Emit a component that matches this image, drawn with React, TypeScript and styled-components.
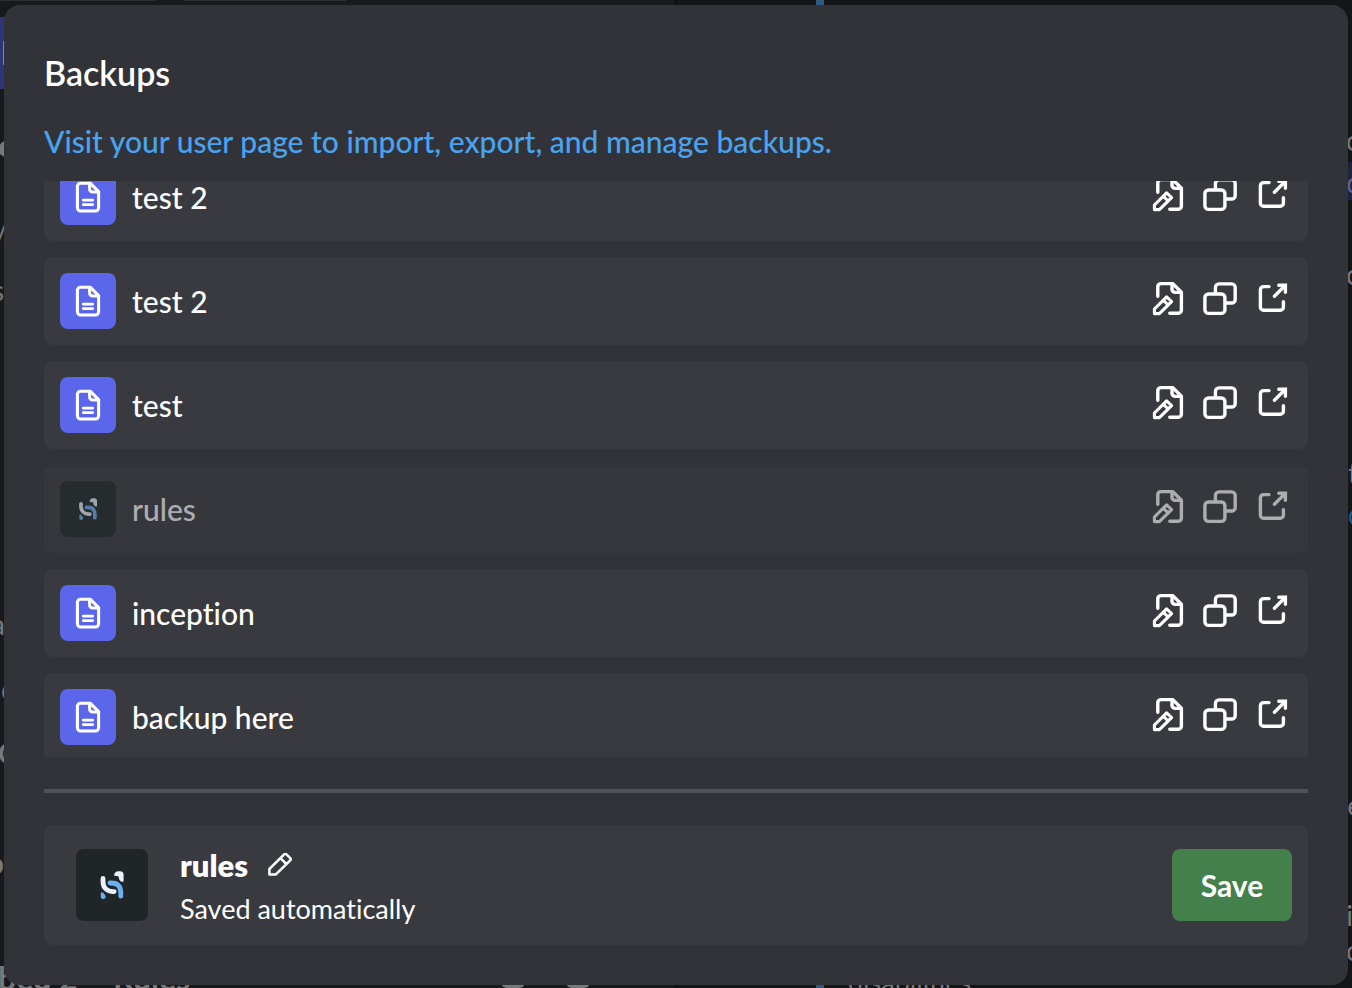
import React, { useLayoutEffect, useRef } from "react";
import styled, { createGlobalStyle } from "styled-components";

const GlobalStyle = createGlobalStyle`
  *, *::before, *::after { box-sizing: border-box; }
  body {
    margin: 0;
    background: #18191c;
    color: #fff;
    font-family: Lato, "Open Sans", sans-serif;
    font-variant-ligatures: none;
  }
`;

/* ---------- page behind the dialog ---------- */

const Page = styled.div`
  position: fixed;
  inset: 0;
  display: flex;
  overflow: hidden;
  color: #77787a;
`;

const EditorPane = styled.div`
  position: relative;
  flex: 1;
  background: #18191c;
  border-right: 4px solid #101113;
`;

const PreviewPane = styled.div`
  position: relative;
  flex: 1;
  background: #141517;
`;

const EmbedBar = styled.div`
  width: 8px;
  height: 100%;
  margin-left: 138px;
  background: #31597c;
`;

const FieldRow = styled.div`
  display: flex;
  gap: 28px;
`;

const FieldEdge = styled.div<{ $width: number }>`
  width: ${(p) => p.$width}px;
  height: 1px;
  background: #2c2d31;
`;

const PrimaryBlock = styled.div`
  width: 72px;
  height: 72px;
  margin-top: 16px;
  padding: 24px 0 24px 3px;
  background: #2f3476;
  &::before {
    content: "";
    display: block;
    width: 3px;
    height: 24px;
    background: #8285a8;
  }
`;

const Dot = styled.div`
  position: absolute;
  top: 140px;
  left: -1px;
  width: 18px;
  height: 18px;
  border-radius: 50%;
  background: #77787a;
`;

const GhostButton = styled.div<{ $left: number }>`
  position: absolute;
  bottom: 0;
  left: ${(p) => p.$left}px;
  width: 24px;
  height: 24px;
  border: 3px solid #77787a;
  border-top: 0;
  border-radius: 6px;
`;

const Mention = styled.div`
  position: absolute;
  top: 162px;
  right: 0;
  width: 12px;
  height: 38px;
  background: #1e2140;
`;

const Fragment = styled.span<{
  $top: number;
  $left?: number;
  $right?: number;
  $bold?: boolean;
  $size?: number;
  $tint?: string;
}>`
  position: absolute;
  top: ${(p) => p.$top}px;
  ${(p) => (p.$right !== undefined ? `right: ${p.$right}px;` : `left: ${p.$left ?? 0}px;`)}
  font-size: ${(p) => p.$size ?? 28}px;
  font-weight: ${(p) => (p.$bold ? 700 : 400)};
  line-height: 32px;
  white-space: pre;
  color: ${(p) => p.$tint ?? "inherit"};
`;

/* ---------- dialog ---------- */

const Overlay = styled.div`
  position: relative;
  display: flex;
  height: 100vh;
  padding: 5px 4px 3px;
`;

const Dialog = styled.main`
  flex: 1;
  min-width: 0;
  display: flex;
  flex-direction: column;
  padding: 48px 40px 40px;
  border-radius: 16px;
  background: #323338;
`;

const Title = styled.h1`
  margin: 0 0 28px;
  font-size: 34px;
  font-weight: 600;
  line-height: 40px;
`;

const UserPageLink = styled.a`
  align-self: flex-start;
  margin-bottom: 20px;
  font-size: 30px;
  font-weight: 500;
  line-height: 40px;
  color: #48a3f1;
  text-decoration: none;
`;

const BackupList = styled.ul`
  flex: 1;
  min-height: 0;
  margin: 0;
  padding: 0;
  display: flex;
  flex-direction: column;
  gap: 16px;
  overflow-y: auto;
  scrollbar-width: none;
  list-style: none;
`;

const BackupRow = styled.li<{ $dimmed: boolean }>`
  flex: none;
  display: flex;
  align-items: center;
  gap: 16px;
  padding: 16px;
  border-radius: 8px;
  background: #393a3f;
  opacity: ${(p) => (p.$dimmed ? 0.6 : 1)};
`;

const Tile = styled.span<{ $size: number; $color: string }>`
  flex: none;
  width: ${(p) => p.$size}px;
  height: ${(p) => p.$size}px;
  border-radius: 8px;
  overflow: hidden;
  background: ${(p) => p.$color};
  svg { display: block; width: 100%; height: 100%; }
`;

const BackupName = styled.span`
  flex: 1;
  font-size: 30px;
  font-weight: 500;
  line-height: 40px;
`;

const Actions = styled.div`
  display: flex;
  gap: 12px;
`;

const IconButton = styled.button`
  display: block;
  padding: 0;
  border: 0;
  background: none;
  color: #fff;
  cursor: pointer;
  svg { display: block; }
`;

const Divider = styled.hr`
  flex: none;
  width: 100%;
  height: 4px;
  margin: 32px 0;
  border: 0;
  background: #4f5459;
`;

const Current = styled.section`
  flex: none;
  display: flex;
  align-items: center;
  gap: 32px;
  padding: 16px 16px 16px 32px;
  border-radius: 8px;
  background: #393a3f;
`;

const CurrentText = styled.div`
  flex: 1;
`;

const CurrentHeading = styled.div`
  display: flex;
  align-items: center;
  gap: 20px;
`;

const CurrentName = styled.h2`
  margin: 0;
  font-size: 31px;
  font-weight: 800;
  line-height: 48px;
`;

const Status = styled.p`
  margin: 0;
  font-size: 27px;
  line-height: 40px;
`;

const SaveButton = styled.button`
  width: 120px;
  height: 72px;
  padding: 0;
  border: 0;
  border-radius: 8px;
  background: #43804c;
  color: #fff;
  font: 700 30px/40px Lato, "Open Sans", sans-serif;
  cursor: pointer;
`;

/* ---------- icons ---------- */

const stroke = {
  fill: "none",
  stroke: "currentColor",
  strokeWidth: 3.4,
  strokeLinecap: "round" as const,
  strokeLinejoin: "round" as const,
};

const FileIcon = () => (
  <svg viewBox="0 0 56 56" {...stroke} strokeWidth="3.1" aria-hidden="true">
    <path d="M20.8 14.2H30.2L38.6 22.6V38.8a3.2 3.2 0 0 1-3.2 3.2H20.6a3.2 3.2 0 0 1-3.2-3.2V17.4a3.2 3.2 0 0 1 3.4-3.2Z" />
    <path d="M29.6 14.6V20a3 3 0 0 0 3 3H38" />
    <path d="M23.3 31.2H32.7M23.3 35.6H32.7" strokeWidth="2.8" />
  </svg>
);

const LogoIcon = () => (
  <svg viewBox="0 0 72 72" fill="none" strokeWidth="4.8" aria-hidden="true">
    <path d="M27 29.4V32.4C27 38.8 31 42.6 37.4 42.6H38.2" stroke="#e8f1fc" strokeLinecap="round" />
    <path d="M34 34H35.6C41.6 34 44.8 37.6 44.8 43.4V47.2" stroke="#6cb0f3" strokeLinecap="round" />
    <path d="M38 26.6C38 24 40 22.2 42.4 22.2H44.2C46.4 22.2 47.6 23.8 47.6 25.4V31.6C47.6 33.2 46.2 33.4 45.2 32.6C43.6 31.4 42.8 30 42.8 28.2C42.8 27.4 42.4 27.2 41.6 27.2Z" fill="#e8f1fc" />
    <path d="M24.8 45C24.8 43 26.2 42.8 27.2 43.8C28.4 45 29.6 46.4 29.6 47.8C29.6 49.2 28.6 50 27.2 50C25.8 50 24.8 49.2 24.8 47.8Z" fill="#6cb0f3" />
  </svg>
);

const EditFileIcon = () => (
  <svg width="40" height="40" viewBox="0 0 40 40" {...stroke} aria-hidden="true">
    <path d="M9.8 15.2V5.8A3.2 3.2 0 0 1 13 2.6H24.8L33.4 11.2V29A3.2 3.2 0 0 1 30.2 32.2H21.8" />
    <path d="M24 2.8V8.2A3.2 3.2 0 0 0 27.2 11.4H33" />
    <path d="M6.4 32.6V28L18.6 15.8L23.6 20.6L11.4 32.6ZM15.2 19.2L20.2 24" strokeWidth="3.1" />
  </svg>
);

const CopyIcon = () => (
  <svg width="40" height="40" viewBox="0 0 40 40" {...stroke} aria-hidden="true">
    <rect x="4.9" y="13" width="20" height="19.4" rx="3.6" />
    <path d="M15.4 12.4V6.5A3.6 3.6 0 0 1 19 2.9H31.6A3.6 3.6 0 0 1 35.2 6.5V18.4A3.6 3.6 0 0 1 31.6 22H25.6" />
  </svg>
);

const OpenIcon = () => (
  <svg width="40" height="40" viewBox="0 0 40 40" {...stroke} aria-hidden="true">
    <path d="M17 5.6H11.6A3.2 3.2 0 0 0 8.4 8.8V26A3.2 3.2 0 0 0 11.6 29.2H28.2A3.2 3.2 0 0 0 31.4 26V20.8" />
    <path d="M22.4 15.2L33 4.6M26.8 4.2H33.4V11.2" strokeLinejoin="miter" />
  </svg>
);

const PencilIcon = () => (
  <svg width="24" height="24" viewBox="0 0 24 24" {...stroke} strokeWidth="2.5" aria-hidden="true">
    <path d="M1.4 21.6V16L15.9 1.6A2 2 0 0 1 18.7 1.6L22 4.8A2 2 0 0 1 22 7.6L7.6 21.6ZM12.4 5.2L18.4 11" />
  </svg>
);

/* ---------- data ---------- */

type Backup = { id: number; name: string; current?: boolean };

const backups: Backup[] = [
  { id: 6, name: "test 2" },
  { id: 5, name: "test 2" },
  { id: 4, name: "test" },
  { id: 3, name: "rules", current: true },
  { id: 2, name: "inception" },
  { id: 1, name: "backup here" },
];

const SCROLL_START = 28;

function Backdrop() {
  return (
    <Page aria-hidden="true">
      <EditorPane>
        <FieldRow>
          <FieldEdge $width={156} />
          <FieldEdge $width={162} />
        </FieldRow>
        <PrimaryBlock />
        <Dot />
        <Fragment $top={214} $left={-4}>/</Fragment>
        <Fragment $top={274} $left={-8}>s</Fragment>
        <Fragment $top={608} $left={-9}>a</Fragment>
        <Fragment $top={673} $left={1}>o</Fragment>
        <Fragment $top={737} $left={-2} $bold>C</Fragment>
        <Fragment $top={847} $left={-12} $bold>b</Fragment>
        <Fragment $top={962} $left={-2} $size={32} $bold>bed 2  - Rules</Fragment>
        <GhostButton $left={501} />
        <GhostButton $left={566} />
      </EditorPane>
      <PreviewPane>
        <EmbedBar />
        <Mention />
        <Fragment $top={124} $right={-10}>o</Fragment>
        <Fragment $top={166} $right={-10} $tint="#5b6190">d</Fragment>
        <Fragment $top={258} $right={-10}>o</Fragment>
        <Fragment $top={457} $right={-6}>t</Fragment>
        <Fragment $top={498} $right={-9} $tint="#1c5c86">c</Fragment>
        <Fragment $top={789} $right={-10}>e</Fragment>
        <Fragment $top={899} $right={-1}>i</Fragment>
        <Fragment $top={934} $right={-10}>o</Fragment>
        <Fragment $top={966} $left={170} $size={27}>disabilities</Fragment>
      </PreviewPane>
    </Page>
  );
}

export default function App() {
  const list = useRef<HTMLUListElement>(null);

  useLayoutEffect(() => {
    if (list.current) list.current.scrollTop = SCROLL_START;
  }, []);

  return (
    <>
      <GlobalStyle />
      <Backdrop />
      <Overlay>
        <Dialog>
          <Title>Backups</Title>
          <UserPageLink href="#user">
            Visit your user page to import, export, and manage backups.
          </UserPageLink>
          <BackupList ref={list}>
            {backups.map((b) => (
              <BackupRow key={b.id} $dimmed={!!b.current}>
                <Tile $size={56} $color={b.current ? "#1f2629" : "#5b66ea"}>
                  {b.current ? <LogoIcon /> : <FileIcon />}
                </Tile>
                <BackupName>{b.name}</BackupName>
                <Actions>
                  <IconButton type="button" aria-label={`Rename ${b.name}`}><EditFileIcon /></IconButton>
                  <IconButton type="button" aria-label={`Duplicate ${b.name}`}><CopyIcon /></IconButton>
                  <IconButton type="button" aria-label={`Open ${b.name}`}><OpenIcon /></IconButton>
                </Actions>
              </BackupRow>
            ))}
          </BackupList>
          <Divider />
          <Current>
            <Tile $size={72} $color="#202528"><LogoIcon /></Tile>
            <CurrentText>
              <CurrentHeading>
                <CurrentName>rules</CurrentName>
                <IconButton type="button" aria-label="Edit name"><PencilIcon /></IconButton>
              </CurrentHeading>
              <Status>Saved automatically</Status>
            </CurrentText>
            <SaveButton type="button">Save</SaveButton>
          </Current>
        </Dialog>
      </Overlay>
    </>
  );
}
